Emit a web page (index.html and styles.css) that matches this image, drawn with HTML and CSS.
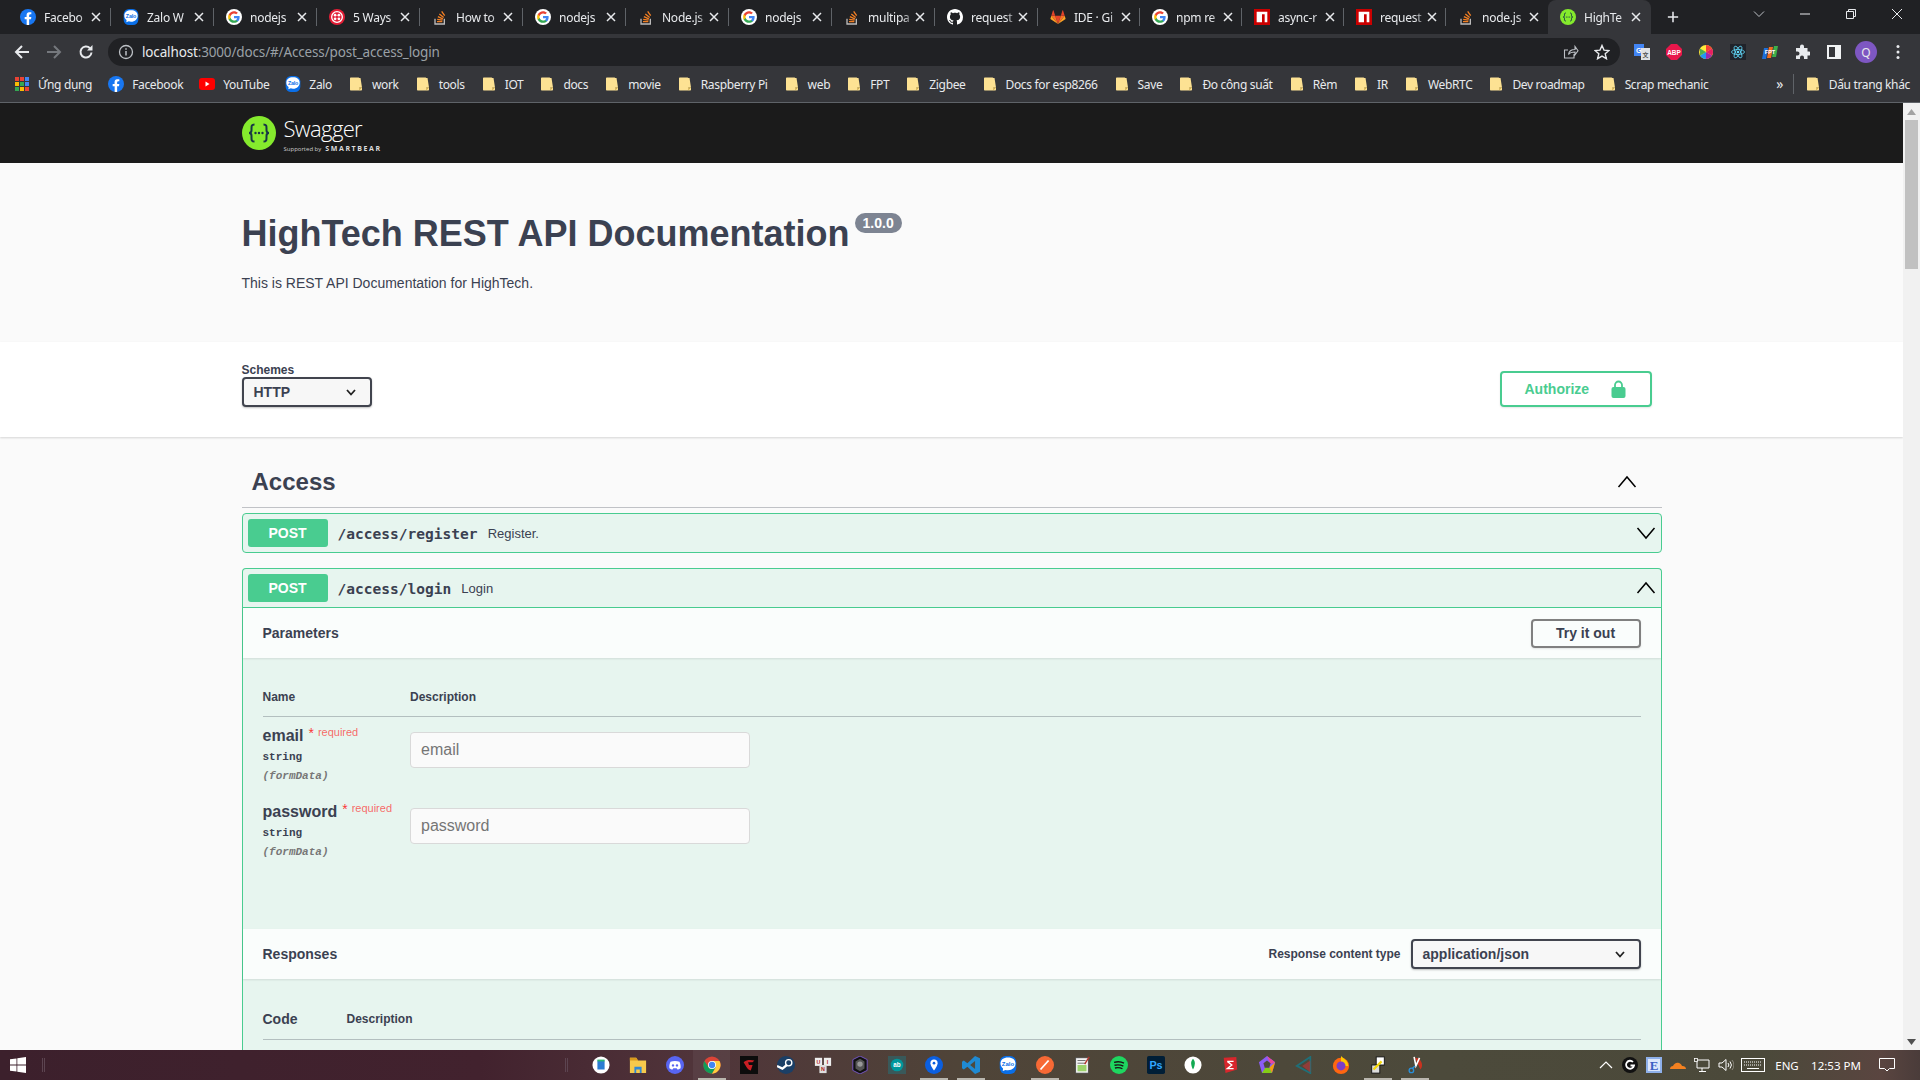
FILE: index.html
```html
<!DOCTYPE html>
<html lang="en">
<head>
<meta charset="utf-8">
<title>HighTech REST API Documentation</title>
<link rel="stylesheet" href="styles.css">
</head>
<body>
<svg class="defs" width="0" height="0" aria-hidden="true">
  <defs>
    <symbol id="i-g" viewBox="0 0 24 24">
      <circle cx="12" cy="12" r="12" fill="#fff"/>
      <g transform="translate(2.4 2.4) scale(.8)">
      <path fill="#4285F4" d="M22.56 12.25c0-.78-.07-1.53-.2-2.25H12v4.26h5.92c-.26 1.37-1.04 2.53-2.21 3.31v2.77h3.57c2.08-1.92 3.28-4.74 3.28-8.09z"/>
      <path fill="#34A853" d="M12 23c2.97 0 5.46-.98 7.28-2.66l-3.57-2.77c-.98.66-2.23 1.06-3.71 1.06-2.86 0-5.29-1.93-6.16-4.53H2.18v2.84C3.99 20.53 7.7 23 12 23z"/>
      <path fill="#FBBC05" d="M5.84 14.09c-.22-.66-.35-1.36-.35-2.09s.13-1.43.35-2.09V7.07H2.18C1.43 8.55 1 10.22 1 12s.43 3.45 1.18 4.93l3.66-2.84z"/>
      <path fill="#EA4335" d="M12 5.38c1.62 0 3.06.56 4.21 1.64l3.15-3.15C17.45 2.09 14.97 1 12 1 7.7 1 3.99 3.47 2.18 7.07l3.66 2.84c.87-2.6 3.3-4.53 6.16-4.53z"/>
      </g>
    </symbol>
    <symbol id="i-fb" viewBox="0 0 24 24">
      <circle cx="12" cy="12" r="12" fill="#1877f2"/>
      <path fill="#fff" d="M16.5 15.5l.5-3.5h-3.3V9.8c0-1 .5-1.9 2-1.9H17V5c-2-.4-5.8-.6-6.8 2.3-.4 1.2-.3 3.3-.3 4.7H7v3.5h3V24h3.7v-8.5z"/>
    </symbol>
    <symbol id="i-zalo" viewBox="0 0 24 24">
      <rect x="1" width="22" height="24" rx="8" fill="#0a6fe8"/>
      <path fill="#fff" d="M2 10C2 5 6 2 12 2s10 3 10 8-4 9-10 9c-1.200 0-2.300-.2-3.300-.5L5 20l.4-3.500C3.500 15 2 13 2 10z"/>
      <text x="12" y="13" class="svg-zalo">Zalo</text>
    </symbol>
    <symbol id="i-twilio" viewBox="0 0 24 24">
      <circle cx="12" cy="12" r="12" fill="#e31e36"/>
      <circle cx="12" cy="12" r="8" fill="none" stroke="#fff" stroke-width="2"/>
      <circle cx="9.200" cy="9.200" r="2" fill="#fff"/><circle cx="14.800" cy="9.200" r="2" fill="#fff"/>
      <circle cx="9.200" cy="14.800" r="2" fill="#fff"/><circle cx="14.800" cy="14.800" r="2" fill="#fff"/>
    </symbol>
    <symbol id="i-so" viewBox="0 0 24 24">
      <path d="M4.500 14.500V22.500H18.500V14.500" fill="none" stroke="#bcbbbb" stroke-width="2"/>
      <path d="M7.500 19h8M7.800 15.500l8 1.300M8.800 11.500l7.500 3.300M11 7.500l6.500 5.200M14.500 3.500l4.500 6.500" fill="none" stroke="#f48024" stroke-width="2"/>
    </symbol>
    <symbol id="i-gh" viewBox="0 0 16 16">
      <path fill="#fff" d="M8 0C3.580 0 0 3.580 0 8c0 3.540 2.290 6.530 5.470 7.590.4.070.55-.17.55-.38 0-.19-.01-.82-.01-1.490-2.010.37-2.530-.49-2.690-.94-.09-.23-.48-.94-.82-1.130-.28-.15-.68-.52-.01-.53.63-.01 1.080.58 1.230.82.72 1.210 1.870.87 2.330.66.07-.52.28-.87.51-1.070-1.780-.2-3.640-.89-3.640-3.950 0-.87.31-1.590.82-2.150-.08-.2-.36-1.020.08-2.120 0 0 .67-.21 2.200.82.64-.18 1.320-.27 2-.27s1.360.09 2 .27c1.530-1.040 2.200-.82 2.200-.82.44 1.100.16 1.920.08 2.120.51.56.82 1.270.82 2.150 0 3.070-1.870 3.750-3.650 3.950.29.25.54.73.54 1.480 0 1.070-.01 1.930-.01 2.200 0 .21.15.46.55.38A8.010 8.010 0 0016 8c0-4.420-3.580-8-8-8z"/>
    </symbol>
    <symbol id="i-gl" viewBox="0 0 24 24">
      <path fill="#e24329" d="M12 22.500L16.200 10H7.800z"/>
      <path fill="#fc6d26" d="M12 22.500L7.800 10H2z"/>
      <path fill="#fca326" d="M2 10L.7 14.300c-.1.4 0 .8.4 1L12 22.500z"/>
      <path fill="#e24329" d="M2 10h5.800L5.300 2.300c-.1-.4-.7-.4-.9 0z"/>
      <path fill="#fc6d26" d="M12 22.500L16.200 10H22z"/>
      <path fill="#fca326" d="M22 10l1.300 4.300c.1.4 0 .8-.4 1L12 22.500z"/>
      <path fill="#e24329" d="M22 10h-5.800l2.500-7.700c.1-.4.7-.4.9 0z"/>
    </symbol>
    <symbol id="i-npm" viewBox="0 0 24 24">
      <rect width="24" height="24" fill="#cb0000"/>
      <path fill="#fff" d="M4 4h16v16h-4V8h-4v12H4z"/>
    </symbol>
    <symbol id="i-sw" viewBox="0 0 34 34">
      <circle cx="17" cy="17" r="17" fill="#85ea2d"/>
      <path d="M12.500 8.500c-3 0-3 1.500-3 4v1.800c0 1.700-1 2.700-2.500 2.700 1.500 0 2.500 1 2.500 2.700v1.800c0 2.500 0 4 3 4M21.500 8.500c3 0 3 1.500 3 4v1.800c0 1.700 1 2.700 2.500 2.700-1.500 0-2.500 1-2.500 2.700v1.800c0 2.500 0 4-3 4" fill="none" stroke="#173646" stroke-width="2"/>
      <circle cx="13.500" cy="17" r="1.200" fill="#173646"/><circle cx="17" cy="17" r="1.200" fill="#173646"/><circle cx="20.500" cy="17" r="1.200" fill="#173646"/>
    </symbol>
    <symbol id="i-folder" viewBox="0 0 16 16">
      <path fill="#fde293" d="M2 2.500C2 1.900 2.400 1.500 3 1.500h7.500c.5 0 .8.300.8.800V11.500H14v2c0 .6-.4 1-1 1H3c-.6 0-1-.4-1-1z"/>
      <path fill="#fde293" d="M10 2h2.500l1.500 9.500h-4z"/>
      <path fill="#c9a94f" d="M11.300 11.500H14L11.300 14.500z"/>
    </symbol>
    <symbol id="i-chrome" viewBox="0 0 24 24">
      <circle cx="12" cy="12" r="11.500" fill="#db4437"/>
      <path fill="#0f9d58" d="M1.800 6.500A11.500 11.500 0 0 0 12 23.500l5-8.500H7.500z"/>
      <path fill="#ffcd40" d="M12 23.500A11.500 11.500 0 0 0 22 6.500h-10l5 8.500z"/>
      <circle cx="12" cy="12" r="5.300" fill="#fff"/><circle cx="12" cy="12" r="4.200" fill="#4285f4"/>
    </symbol>
    <symbol id="i-chev" viewBox="0 0 20 20">
      <polyline points="1.500,5 10,15 18.500,5" fill="none" stroke="#000" stroke-width="1.500"/>
    </symbol>
    <symbol id="i-chevup" viewBox="0 0 20 20">
      <polyline points="1.500,15 10,5 18.500,15" fill="none" stroke="#000" stroke-width="1.500"/>
    </symbol>
    <symbol id="i-sel" viewBox="0 0 10 10">
      <polyline points="1,3 5,7.500 9,3" fill="none" stroke="#222" stroke-width="1.800"/>
    </symbol>
    <symbol id="i-x" viewBox="0 0 10 10">
      <path d="M1 1l8 8M9 1l-8 8" stroke="#e8eaed" stroke-width="1.500" fill="none"/>
    </symbol>
  </defs>
</svg>

<div class="app">
  <header class="tabstrip">
    <div class="tab"><svg class="fav"><use href="#i-fb"/></svg><span class="tab-title">Facebo</span><svg class="tab-x"><use href="#i-x"/></svg></div>
    <div class="tab"><svg class="fav"><use href="#i-zalo"/></svg><span class="tab-title">Zalo W</span><svg class="tab-x"><use href="#i-x"/></svg></div>
    <div class="tab"><svg class="fav"><use href="#i-g"/></svg><span class="tab-title">nodejs</span><svg class="tab-x"><use href="#i-x"/></svg></div>
    <div class="tab"><svg class="fav"><use href="#i-twilio"/></svg><span class="tab-title">5 Ways</span><svg class="tab-x"><use href="#i-x"/></svg></div>
    <div class="tab"><svg class="fav"><use href="#i-so"/></svg><span class="tab-title">How to</span><svg class="tab-x"><use href="#i-x"/></svg></div>
    <div class="tab"><svg class="fav"><use href="#i-g"/></svg><span class="tab-title">nodejs</span><svg class="tab-x"><use href="#i-x"/></svg></div>
    <div class="tab"><svg class="fav"><use href="#i-so"/></svg><span class="tab-title">Node.js</span><svg class="tab-x"><use href="#i-x"/></svg></div>
    <div class="tab"><svg class="fav"><use href="#i-g"/></svg><span class="tab-title">nodejs</span><svg class="tab-x"><use href="#i-x"/></svg></div>
    <div class="tab"><svg class="fav"><use href="#i-so"/></svg><span class="tab-title">multipa</span><svg class="tab-x"><use href="#i-x"/></svg></div>
    <div class="tab"><svg class="fav"><use href="#i-gh"/></svg><span class="tab-title">request</span><svg class="tab-x"><use href="#i-x"/></svg></div>
    <div class="tab tab-narrow"><svg class="fav"><use href="#i-gl"/></svg><span class="tab-title">IDE · Gi</span><svg class="tab-x"><use href="#i-x"/></svg></div>
    <div class="tab tab-narrow"><svg class="fav"><use href="#i-g"/></svg><span class="tab-title">npm re</span><svg class="tab-x"><use href="#i-x"/></svg></div>
    <div class="tab tab-narrow"><svg class="fav"><use href="#i-npm"/></svg><span class="tab-title">async-r</span><svg class="tab-x"><use href="#i-x"/></svg></div>
    <div class="tab tab-narrow"><svg class="fav"><use href="#i-npm"/></svg><span class="tab-title">request</span><svg class="tab-x"><use href="#i-x"/></svg></div>
    <div class="tab tab-narrow tab-before-active"><svg class="fav"><use href="#i-so"/></svg><span class="tab-title">node.js</span><svg class="tab-x"><use href="#i-x"/></svg></div>
    <div class="tab tab-active"><svg class="fav"><use href="#i-sw"/></svg><span class="tab-title">HighTe</span><svg class="tab-x"><use href="#i-x"/></svg></div>
    <div class="newtab"><svg class="win-ico" viewBox="0 0 14 14"><path d="M7 1v12M1 7h12" stroke="#e8eaed" stroke-width="1.800" fill="none"/></svg></div>
    <div class="win-controls">
      <div class="win-btn"><svg class="win-ico" viewBox="0 0 12 12"><polyline points="1,3.500 6,8.500 11,3.500" fill="none" stroke="#bdc1c6" stroke-width="1"/></svg></div>
      <div class="win-btn"><svg class="win-ico" viewBox="0 0 12 12"><path d="M1 6h10" stroke="#e8eaed" stroke-width="1"/></svg></div>
      <div class="win-btn"><svg class="win-ico" viewBox="0 0 12 12"><path d="M1.500 3.500h7v7h-7zM3.500 3.500v-2h7v7h-2" fill="none" stroke="#e8eaed" stroke-width="1"/></svg></div>
      <div class="win-btn"><svg class="win-ico" viewBox="0 0 12 12"><path d="M1 1l10 10M11 1L1 11" stroke="#e8eaed" stroke-width="1"/></svg></div>
    </div>
  </header>

  <div class="toolbar">
    <div class="tool-btn"><svg class="tool-ico" viewBox="0 0 16 16"><path d="M15 8H2M8 2L2 8l6 6" fill="none" stroke="#e8eaed" stroke-width="2"/></svg></div>
    <div class="tool-btn"><svg class="tool-ico" viewBox="0 0 16 16"><path d="M1 8h13M8 2l6 6-6 6" fill="none" stroke="#75787d" stroke-width="2"/></svg></div>
    <div class="tool-btn"><svg class="tool-ico" viewBox="0 0 16 16"><path d="M13.500 8.500A5.500 5.500 0 1 1 12 4.200" fill="none" stroke="#e8eaed" stroke-width="2"/><path d="M14.500 1v5.500H9z" fill="#e8eaed"/></svg></div>
    <div class="address">
      <svg class="tool-ico" viewBox="0 0 16 16"><circle cx="8" cy="8" r="6.500" fill="none" stroke="#bdc1c6" stroke-width="1.300"/><path d="M8 7v4.500M8 4.200v1.500" stroke="#bdc1c6" stroke-width="1.500"/></svg>
      <span class="url"><span class="url-host">localhost</span>:3000/docs/#/Access/post_access_login</span>
      <span class="addr-end">
        <svg class="tool-ico" viewBox="0 0 16 16"><path d="M11 10v4H1.500V6H5M5.500 10.500c.5-3.500 3-5 6.500-5V2.500l3 4.300-3 4V8c-2.500 0-5 .5-6.500 2.500z" fill="none" stroke="#bdc1c6" stroke-width="1.100"/></svg>
        <svg class="tool-ico" viewBox="0 0 16 16"><path d="M8 1.500l2 4.600 5 .4-3.800 3.300 1.200 4.900L8 12.100l-4.400 2.600 1.200-4.900L1 6.500l5-.4z" fill="none" stroke="#e8eaed" stroke-width="1.400"/></svg>
      </span>
    </div>
    <div class="ext-row">
      <div class="tool-btn"><svg class="ext-ico" viewBox="0 0 16 16"><rect x="0" y="0" width="10" height="12" fill="#4285f4"/><rect x="7" y="4" width="9" height="12" fill="#dfe1e5"/><text x="4.800" y="8.500" class="svg-ext">G</text><text x="11.500" y="13" class="svg-ext svg-ext-dark">文</text></svg></div>
      <div class="tool-btn"><svg class="ext-ico" viewBox="0 0 16 16"><path d="M5 0h6l5 5v6l-5 5H5l-5-5V5z" fill="#e8174b"/><text x="8" y="10.500" class="svg-abp">ABP</text></svg></div>
      <div class="tool-btn"><svg class="ext-ico" viewBox="0 0 16 16"><circle cx="8" cy="8" r="7" fill="#ffeb3b"/><path d="M8 8V1a7 7 0 0 1 6 3.500z" fill="#f44336"/><path d="M8 8l6-3.500A7 7 0 0 1 14 11.500z" fill="#e91e63"/><path d="M8 8l6 3.500A7 7 0 0 1 8 15z" fill="#9c27b0"/><path d="M8 8v7a7 7 0 0 1-6-3.500z" fill="#2196f3"/><path d="M8 8l-6 3.500V4.500z" fill="#4caf50"/></svg></div>
      <div class="tool-btn"><svg class="ext-ico" viewBox="0 0 16 16"><rect width="16" height="16" fill="#20232a"/><g fill="none" stroke="#61dafb" stroke-width=".8"><ellipse cx="8" cy="8" rx="6.500" ry="2.500"/><ellipse cx="8" cy="8" rx="6.500" ry="2.500" transform="rotate(60 8 8)"/><ellipse cx="8" cy="8" rx="6.500" ry="2.500" transform="rotate(120 8 8)"/></g><circle cx="8" cy="8" r="1.300" fill="#61dafb"/></svg></div>
      <div class="tool-btn"><svg class="ext-ico" viewBox="0 0 16 16"><path d="M2 4h4L4 15H0z" fill="#1e6fd9"/><path d="M7 3h4L9 14H5z" fill="#f26f21"/><path d="M12 2h4l-2 11h-4z" fill="#3cb04a"/><text x="8" y="10" class="svg-fpt">FPT</text></svg></div>
      <div class="tool-btn"><svg class="ext-ico" viewBox="0 0 16 16"><path fill="#e8eaed" d="M6 2.500a2 2 0 0 1 4 0V4h3.500v3.500H15a2 2 0 0 1 0 4h-1.500V15H10v-1.500a2 2 0 0 0-4 0V15H2v-3.500h1.500a2 2 0 0 0 0-4H2V4h4z"/></svg></div>
      <div class="tool-btn"><svg class="ext-ico" viewBox="0 0 16 16"><path fill-rule="evenodd" d="M1 1h14v14H1zM3 3v10h6V3z" fill="#f1f3f4"/></svg></div>
      <div class="tool-btn"><span class="avatar">Q</span></div>
      <div class="tool-btn"><svg class="ext-ico" viewBox="0 0 16 16"><circle cx="8" cy="2.500" r="1.500" fill="#e8eaed"/><circle cx="8" cy="8" r="1.500" fill="#e8eaed"/><circle cx="8" cy="13.500" r="1.500" fill="#e8eaed"/></svg></div>
    </div>
  </div>

  <nav class="bookmarks">
    <div class="bm"><svg class="fav" viewBox="0 0 16 16"><g><rect x="1" y="1" width="4" height="4" fill="#ea4335"/><rect x="6" y="1" width="4" height="4" fill="#ea4335"/><rect x="11" y="1" width="4" height="4" fill="#4285f4"/><rect x="1" y="6" width="4" height="4" fill="#fbbc05"/><rect x="6" y="6" width="4" height="4" fill="#34a853"/><rect x="11" y="6" width="4" height="4" fill="#4285f4"/><rect x="1" y="11" width="4" height="4" fill="#34a853"/><rect x="6" y="11" width="4" height="4" fill="#fbbc05"/><rect x="11" y="11" width="4" height="4" fill="#ea4335"/></g></svg><span>Ứng dụng</span></div>
    <div class="bm"><svg class="fav"><use href="#i-fb"/></svg><span>Facebook</span></div>
    <div class="bm"><svg class="fav" viewBox="0 0 16 16"><rect y="2" width="16" height="12" rx="3" fill="#f00"/><path d="M6.500 5.500v5l4-2.500z" fill="#fff"/></svg><span>YouTube</span></div>
    <div class="bm"><svg class="fav"><use href="#i-zalo"/></svg><span>Zalo</span></div>
    <div class="bm"><svg class="fav"><use href="#i-folder"/></svg><span>work</span></div>
    <div class="bm"><svg class="fav"><use href="#i-folder"/></svg><span>tools</span></div>
    <div class="bm"><svg class="fav"><use href="#i-folder"/></svg><span>IOT</span></div>
    <div class="bm"><svg class="fav"><use href="#i-folder"/></svg><span>docs</span></div>
    <div class="bm"><svg class="fav"><use href="#i-folder"/></svg><span>movie</span></div>
    <div class="bm"><svg class="fav"><use href="#i-folder"/></svg><span>Raspberry Pi</span></div>
    <div class="bm"><svg class="fav"><use href="#i-folder"/></svg><span>web</span></div>
    <div class="bm"><svg class="fav"><use href="#i-folder"/></svg><span>FPT</span></div>
    <div class="bm"><svg class="fav"><use href="#i-folder"/></svg><span>Zigbee</span></div>
    <div class="bm"><svg class="fav"><use href="#i-folder"/></svg><span>Docs for esp8266</span></div>
    <div class="bm"><svg class="fav"><use href="#i-folder"/></svg><span>Save</span></div>
    <div class="bm"><svg class="fav"><use href="#i-folder"/></svg><span>Đo công suất</span></div>
    <div class="bm"><svg class="fav"><use href="#i-folder"/></svg><span>Rèm</span></div>
    <div class="bm"><svg class="fav"><use href="#i-folder"/></svg><span>IR</span></div>
    <div class="bm"><svg class="fav"><use href="#i-folder"/></svg><span>WebRTC</span></div>
    <div class="bm"><svg class="fav"><use href="#i-folder"/></svg><span>Dev roadmap</span></div>
    <div class="bm"><svg class="fav"><use href="#i-folder"/></svg><span>Scrap mechanic</span></div>
    <div class="bm-end">
      <span class="bm-more">»</span>
      <div class="bm bm-other"><svg class="fav"><use href="#i-folder"/></svg><span>Dấu trang khác</span></div>
    </div>
  </nav>

  <div class="viewport">
    <main class="page">
      <div class="topbar">
        <div class="wrap logo">
          <svg class="logo-mark"><use href="#i-sw"/></svg>
          <div class="logo-text">
            <span class="logo-name">Swagger</span>
            <span class="logo-sub"><span class="logo-by">Supported by</span><span class="logo-sb">SMARTBEAR</span></span>
          </div>
        </div>
      </div>

      <section class="info">
        <div class="wrap">
          <div class="title-row">
            <h2 class="title">HighTech REST API Documentation</h2>
            <span class="version">1.0.0</span>
          </div>
          <p class="desc">This is REST API Documentation for HighTech.</p>
        </div>
      </section>

      <section class="schemes">
        <div class="wrap schemes-row">
          <div>
            <div class="schemes-label">Schemes</div>
            <div class="select select-http"><span>HTTP</span><svg class="sel-ico"><use href="#i-sel"/></svg></div>
          </div>
          <button class="authorize"><span>Authorize</span>
            <svg class="lock" viewBox="0 0 15 18"><path d="M4 8V5a3.500 3.500 0 0 1 7 0v3" fill="none" stroke="#49cc90" stroke-width="1.800"/><rect x="0.500" y="7" width="14" height="11" rx="2" fill="#49cc90"/></svg>
          </button>
        </div>
      </section>

      <div class="wrap">
        <div class="tag">
          <h3 class="tag-name">Access</h3>
          <svg class="chev"><use href="#i-chevup"/></svg>
        </div>

        <div class="opblock opblock-first">
          <div class="summary">
            <span class="method">POST</span>
            <span class="path">/access/register</span>
            <span class="sum-text">Register.</span>
            <svg class="chev"><use href="#i-chev"/></svg>
          </div>
        </div>

        <div class="opblock opblock-open">
          <div class="summary summary-open">
            <span class="method">POST</span>
            <span class="path">/access/login</span>
            <span class="sum-text">Login</span>
            <svg class="chev"><use href="#i-chevup"/></svg>
          </div>

          <div class="sec-head">
            <h4 class="sec-title">Parameters</h4>
            <button class="try">Try it out</button>
          </div>

          <div class="params">
            <div class="param-head">
              <span>Name</span>
              <span>Description</span>
            </div>
            <div class="param-row">
              <div class="param-name">
                <div class="pname-line"><span class="pname">email</span><span class="star">*</span><span class="req">required</span></div>
                <div class="ptype">string</div>
                <div class="pin">(formData)</div>
              </div>
              <div class="param-val"><input class="input" type="text" placeholder="email"></div>
            </div>
            <div class="param-row">
              <div class="param-name">
                <div class="pname-line"><span class="pname">password</span><span class="star">*</span><span class="req">required</span></div>
                <div class="ptype">string</div>
                <div class="pin">(formData)</div>
              </div>
              <div class="param-val"><input class="input" type="text" placeholder="password"></div>
            </div>
          </div>

          <div class="sec-head">
            <h4 class="sec-title">Responses</h4>
            <div class="rct">
              <span class="rct-label">Response content type</span>
              <div class="select select-json"><span>application/json</span><svg class="sel-ico"><use href="#i-sel"/></svg></div>
            </div>
          </div>

          <div class="resp">
            <div class="resp-head"><span class="resp-code">Code</span><span class="resp-desc">Description</span></div>
          </div>
        </div>
      </div>
    </main>

    <aside class="scrollbar">
      <div class="sb-btn"><svg class="sb-arrow" viewBox="0 0 9 6"><path d="M4.500 0L9 6H0z" fill="#a3a3a3"/></svg></div>
      <div class="sb-thumb"></div>
      <div class="sb-track"></div>
      <div class="sb-btn"><svg class="sb-arrow" viewBox="0 0 9 6"><path d="M0 0h9L4.500 6z" fill="#505050"/></svg></div>
    </aside>
  </div>

  <footer class="taskbar">
    <svg class="win-logo" viewBox="0 0 16 16"><path fill="#fff" d="M0 2.300l6.500-.9v6.200H0zM7.300 1.300L16 0v7.600H7.300zM0 8.400h6.500v6.200L0 13.700zM7.300 8.400H16V16l-8.700-1.200z"/></svg>
    <span class="task-div"></span>
    <span class="task-div task-div-2"></span>

    <div class="ticon"><svg class="tsvg" viewBox="0 0 20 20"><circle cx="10" cy="10" r="9.500" fill="#fff"/><rect x="6" y="5" width="8" height="10" fill="#2b7cd3"/><rect x="6" y="4" width="8" height="2" fill="#2bb673"/></svg></div>
    <div class="ticon"><svg class="tsvg" viewBox="0 0 20 20"><path d="M1 2h7l2 3h9v14H1z" fill="#f6c94c"/><path d="M1 2h7l2 3H1z" fill="#d99a1c"/><path d="M6 12h8v7h-2v-4H8v4H6z" fill="#2f88d6"/></svg></div>
    <div class="ticon"><svg class="tsvg" viewBox="0 0 20 20"><circle cx="10" cy="10" r="10" fill="#5865f2"/><path d="M5 6.500c3-1.300 7-1.300 10 0 1 2 1.500 4.500 1.200 7-1.300 1-2.500 1.300-3.500 1.500l-.8-1.300H8.100l-.8 1.300c-1-.2-2.200-.5-3.500-1.500-.3-2.500.2-5 1.200-7z" fill="#fff"/><circle cx="7.800" cy="10.500" r="1.300" fill="#5865f2"/><circle cx="12.200" cy="10.500" r="1.300" fill="#5865f2"/></svg></div>
    <div class="ticon ticon-run ticon-active"><svg class="tsvg"><use href="#i-chrome"/></svg></div>
    <div class="ticon"><svg class="tsvg" viewBox="0 0 20 20"><rect width="20" height="20" fill="#0c0c0c"/><path d="M4 7c3-3 8-3 12-2l-2 2H9l1 3h4l-2 6c-2 0-4-2-5-4z" fill="#c81e24"/></svg></div>
    <div class="ticon"><svg class="tsvg" viewBox="0 0 20 20"><circle cx="10" cy="10" r="10" fill="#1b3f66"/><circle cx="13" cy="7.500" r="3.500" fill="none" stroke="#fff" stroke-width="1.500"/><path d="M0 11l6 3 5-4" stroke="#fff" stroke-width="2.500" fill="none"/></svg></div>
    <div class="ticon"><svg class="tsvg" viewBox="0 0 20 20"><rect x="1" y="2" width="8" height="9" fill="#eee"/><rect x="11" y="2" width="8" height="9" fill="#eee"/><rect x="6" y="10" width="8" height="9" fill="#ddd"/><text x="5" y="9" class="svg-uni">U</text><text x="15" y="9" class="svg-uni">I</text><text x="10" y="17" class="svg-uni">N</text></svg></div>
    <div class="ticon"><svg class="tsvg" viewBox="0 0 20 20"><path d="M10 0l8 4v12l-8 4-8-4V4z" fill="#111" stroke="#7d5bd0" stroke-width="1"/><path d="M5 6l5-3 5 3v8l-5 3-5-3z" fill="#555"/><circle cx="10" cy="9" r="3" fill="#999"/></svg></div>
    <div class="ticon"><svg class="tsvg" viewBox="0 0 20 20"><rect width="20" height="20" fill="#39595a"/><circle cx="10" cy="10" r="7" fill="#00979c"/><text x="10" y="12.500" class="svg-ard">ab</text></svg></div>
    <div class="ticon ticon-run"><svg class="tsvg" viewBox="0 0 20 20"><circle cx="10" cy="10" r="10" fill="#0b5fe0"/><path d="M10 4a4 4 0 0 1 4 4c0 3-4 8-4 8s-4-5-4-8a4 4 0 0 1 4-4z" fill="#fff"/><circle cx="10" cy="8" r="1.500" fill="#0b5fe0"/></svg></div>
    <div class="ticon ticon-run"><svg class="tsvg" viewBox="0 0 20 20"><path d="M14.500 0L20 2.500v15L14.500 20 6 12l-4 3-2-1.500v-7L2 5l4 3z" fill="#1f8ad2"/><path d="M14.500 5.500L9 10l5.500 4.500z" fill="#4d4a3c"/></svg></div>
    <div class="ticon"><svg class="tsvg"><use href="#i-zalo"/></svg></div>
    <div class="ticon ticon-run"><svg class="tsvg" viewBox="0 0 20 20"><circle cx="10" cy="10" r="10" fill="#f76935"/><path d="M5 15L14 5" stroke="#fff" stroke-width="2"/></svg></div>
    <div class="ticon"><svg class="tsvg" viewBox="0 0 20 20"><rect x="3" y="2" width="14" height="17" fill="#f4f4f4" stroke="#444" stroke-width=".8"/><rect x="5" y="10" width="10" height="7" fill="#9dd36b"/><path d="M5 5h9M5 8h9" stroke="#666" stroke-width="1"/><path d="M13 9l5-8" stroke="#b5332b" stroke-width="1.500"/></svg></div>
    <div class="ticon"><svg class="tsvg" viewBox="0 0 20 20"><circle cx="10" cy="10" r="10" fill="#1ed760"/><path d="M4.500 7c4-1 8-.7 11 1M5 10.300c3.500-.8 7-.5 9.800 1M5.500 13.300c3-.6 6-.4 8.300.9" fill="none" stroke="#191414" stroke-width="1.500"/></svg></div>
    <div class="ticon"><svg class="tsvg" viewBox="0 0 20 20"><rect width="20" height="20" rx="2" fill="#001e36"/><text x="10" y="14.500" class="svg-ps">Ps</text></svg></div>
    <div class="ticon"><svg class="tsvg" viewBox="0 0 20 20"><circle cx="10" cy="10" r="9.500" fill="#fff"/><path d="M10 3c2.500 2.500 3 6 0 12-3-6-2.500-9.500 0-12z" fill="#13aa52"/></svg></div>
    <div class="ticon"><svg class="tsvg" viewBox="0 0 20 20"><path d="M3 2l14-1 1 14-13 4z" fill="#d8262c"/><path d="M7 6h7M7 6l5 4-5 4h7" stroke="#fff" stroke-width="1.500" fill="none"/></svg></div>
    <div class="ticon"><svg class="tsvg" viewBox="0 0 20 20"><path d="M10 0l9 7-3.500 12h-11L1 7z" fill="#8b5cf6"/><path d="M10 0l9 7-5 2z" fill="#ec4899"/><path d="M19 7l-3.500 12-3-6z" fill="#f59e0b"/><path d="M4.500 19h11l-3-6H8z" fill="#84cc16"/><path d="M10 5l4 3-1.500 5h-5L6 8z" fill="#4d4a3c"/></svg></div>
    <div class="ticon"><svg class="tsvg" viewBox="0 0 20 20"><path d="M17 1v18L2 11z" fill="none" stroke="#1f6f78" stroke-width="2"/><path d="M17 5L8 11l9 7z" fill="#a33a3a" opacity=".8"/></svg></div>
    <div class="ticon"><svg class="tsvg" viewBox="0 0 20 20"><circle cx="10" cy="11" r="9" fill="#ff6611"/><path d="M10 0c3 3 8 5 8 11H10z" fill="#ffc800"/><circle cx="10" cy="11" r="5" fill="#7b3ec9"/></svg></div>
    <div class="ticon ticon-run"><svg class="tsvg" viewBox="0 0 20 20"><rect x="8" y="1" width="9" height="9" fill="#fff" stroke="#111"/><rect x="3" y="10" width="9" height="9" fill="#ddd" stroke="#111"/><path d="M5 15l9-9" stroke="#f5d90a" stroke-width="2.500"/></svg></div>
    <div class="ticon ticon-run"><svg class="tsvg" viewBox="0 0 20 20"><path d="M10 2a8 8 0 0 1 6 13L10 2z" fill="#c9321f"/><path d="M9 1l2 10 4-9" stroke="#fff" stroke-width="1.800" fill="none"/><circle cx="6" cy="16" r="2.500" fill="none" stroke="#2a8fd8" stroke-width="1.500"/><path d="M7 14l3-3" stroke="#2a8fd8" stroke-width="1.500"/></svg></div>

    <div class="tray">
      <div class="tray-i"><svg class="tray-ico" viewBox="0 0 16 16"><polyline points="2,11 8,5 14,11" fill="none" stroke="#fff" stroke-width="1.200"/></svg></div>
      <div class="tray-i"><svg class="tray-ico" viewBox="0 0 16 16"><circle cx="8" cy="8" r="8" fill="#111"/><path d="M11 5a4 4 0 1 0 1 3.500H8.500" fill="none" stroke="#fff" stroke-width="1.800"/></svg></div>
      <div class="tray-i"><svg class="tray-ico" viewBox="0 0 16 16"><rect width="16" height="16" fill="#8eb0ea"/><rect x="2" y="2" width="12" height="12" fill="#dbe6fb"/><text x="8" y="13" class="svg-e">E</text></svg></div>
      <div class="tray-i"><svg class="tray-ico" viewBox="0 0 16 16"><path d="M0 12c0-2 1.500-3 3-3 1-2.500 3.500-4 6-3 1.500.5 2.500 1.700 3 3 2-.3 4 1 4 3z" fill="#f48120"/></svg></div>
      <div class="tray-i"><svg class="tray-ico" viewBox="0 0 16 16"><path d="M3 3h12v8H3zM8 11v3M5 14.500h7" fill="none" stroke="#fff" stroke-width="1"/><rect x="0.500" y="1.500" width="3" height="3" fill="#4d4a3c" stroke="#fff" stroke-width=".8"/></svg></div>
      <div class="tray-i"><svg class="tray-ico" viewBox="0 0 16 16"><path d="M1 6h3l4-3.500v11L4 10H1z" fill="none" stroke="#fff" stroke-width="1"/><path d="M10 6a3 3 0 0 1 0 4M12 4.500a5.500 5.500 0 0 1 0 7" fill="none" stroke="#fff" stroke-width="1"/><path d="M14 3a8 8 0 0 1 0 10" fill="none" stroke="#8c8a80" stroke-width="1"/></svg></div>
      <div class="tray-i tray-kb"><svg class="kb-ico" viewBox="0 0 24 14"><rect x=".5" y=".5" width="23" height="13" fill="none" stroke="#fff"/><path d="M3 4h18M3 7h18" stroke="#fff" stroke-dasharray="1 1"/><path d="M6 10.500h12" stroke="#fff"/></svg></div>
      <span class="tray-lang">ENG</span>
      <span class="tray-time">12:53 PM</span>
      <div class="tray-note"><svg class="note-ico" viewBox="0 0 16 14"><path d="M.5.500h15v10h-5l-2.500 2.500-2.500-2.500h-5z" fill="none" stroke="#fff" stroke-width="1"/></svg></div>
      <div class="show-desk"></div>
    </div>
  </footer>
</div>
</body>
</html>
```

FILE: styles.css
```css
* { box-sizing: border-box; }
html, body { margin: 0; padding: 0; height: 100%; overflow: hidden; }
body { font-family: "Liberation Sans", Arial, sans-serif; color: #3b4151; }
.defs { position: absolute; }
.app { display: flex; flex-direction: column; width: 1920px; height: 1080px; overflow: hidden; }

/* browser chrome */
.tabstrip { flex: 0 0 34px; background: #202124; display: flex; align-items: center; padding-left: 8px; font-family: "Noto Sans", sans-serif; font-size: 12px; letter-spacing: -.25px; color: #e8eaed; }
.tab { flex: 0 0 103px; height: 18px; display: flex; align-items: center; padding-left: 12px; border-right: 1px solid #5f6368; }
.tab-narrow { flex-basis: 102px; }
.tab-before-active { border-right-color: transparent; }
.tab-active { flex-basis: 103px; height: 34px; align-self: flex-end; background: #35363a; border-right: 0; border-radius: 8px 8px 0 0; }
.fav { width: 16px; height: 16px; flex: none; display: block; }
.tab-title { width: 44px; margin-left: 8px; white-space: nowrap; overflow: hidden; -webkit-mask-image: linear-gradient(90deg, #000 80%, rgba(0,0,0,.25)); mask-image: linear-gradient(90deg, #000 80%, rgba(0,0,0,.25)); }
.tab-x { width: 10px; height: 10px; margin-left: 3px; flex: none; }
.newtab { width: 28px; margin-left: 8px; display: flex; justify-content: center; }
.win-ico { width: 12px; height: 12px; display: block; }
.win-controls { margin-left: auto; display: flex; align-self: flex-start; height: 28px; }
.win-btn { width: 46px; display: flex; align-items: center; justify-content: center; }

.toolbar { flex: 0 0 32px; background: #35363a; display: flex; align-items: flex-start; padding: 4px 0 0 6px; }
.tool-btn { width: 32px; height: 28px; display: flex; align-items: center; justify-content: center; flex: none; }
.tool-ico { width: 16px; height: 16px; display: block; flex: none; }
.address { width: 1512px; height: 28px; margin-left: 6px; background: #202124; border-radius: 14px; display: flex; align-items: center; padding: 0 10px; gap: 8px; font-family: "Noto Sans", sans-serif; font-size: 13.500px; letter-spacing: -.15px; color: #9aa0a6; }
.url-host { color: #e8eaed; }
.addr-end { margin-left: auto; display: flex; gap: 15px; }
.ext-row { display: flex; margin-left: 6px; }
.ext-ico { width: 16px; height: 16px; display: block; }
.avatar { width: 22px; height: 22px; border-radius: 50%; background: #7e57c2; color: #e8eaed; font: 400 12px "Noto Sans", sans-serif; display: flex; align-items: center; justify-content: center; }
.svg-ext { font: 700 7px "Liberation Sans", sans-serif; fill: #fff; text-anchor: middle; }
.svg-ext-dark { fill: #555; font-family: "Noto Sans CJK SC", sans-serif; font-size: 6px; }
.svg-abp { font: 700 6.400px "Liberation Sans", sans-serif; fill: #fff; text-anchor: middle; }
.svg-fpt { font: 700 5.500px "Liberation Sans", sans-serif; fill: #fff; text-anchor: middle; }
.svg-zalo { font: 700 8px "Liberation Sans", sans-serif; fill: #0a6fe8; text-anchor: middle; }
.svg-uni { font: 700 6px "Liberation Sans", sans-serif; fill: #b3261e; text-anchor: middle; }
.svg-ard { font: 700 7px "Liberation Sans", sans-serif; fill: #fff; text-anchor: middle; }
.svg-ps { font: 700 12px "Liberation Sans", sans-serif; fill: #31a8ff; text-anchor: middle; }
.svg-e { font: 700 13px "Liberation Serif", serif; fill: #3b5fc4; text-anchor: middle; }

.bookmarks { flex: 0 0 37px; background: #35363a; border-bottom: 1px solid #5f6368; display: flex; align-items: center; font-family: "Noto Sans", sans-serif; font-size: 12px; letter-spacing: -.34px; color: #e8eaed; padding-left: 6px; }
.bm { display: flex; align-items: center; gap: 8px; padding: 0 8px; white-space: nowrap; flex: none; }
.bm-end { margin-left: auto; display: flex; align-items: center; }
.bm-more { width: 27px; font-size: 14px; text-align: center; border-right: 1px solid #5f6368; line-height: 20px; margin-right: 3px; padding: 0 4px; }
.bm-other { padding-right: 10px; }

/* page */
.viewport { flex: 1; display: flex; min-height: 0; }
.page { flex: 1; min-width: 0; background: #fafafa; overflow: hidden; }
.wrap { max-width: 1460px; margin: 0 auto; padding: 0 20px; }
.scrollbar { flex: 0 0 17px; background: #f1f1f1; display: flex; flex-direction: column; }
.sb-btn { flex: 0 0 17px; display: flex; align-items: center; justify-content: center; }
.sb-arrow { width: 9px; height: 6px; display: block; }
.sb-thumb { flex: 0 0 149px; margin: 0 2px; background: #c1c1c1; }
.sb-track { flex: 1; }

.topbar { height: 60px; background: #1b1b1b; }
.logo { display: flex; align-items: center; height: 60px; gap: 8px; }
.logo-mark { width: 34px; height: 34px; display: block; flex: none; }
.logo-text { display: flex; flex-direction: column; color: #fff; font-family: "Open Sans", sans-serif; padding-top: 3px; }
.logo-name { font-size: 22px; line-height: 26px; letter-spacing: -.65px; font-weight: 300; }
.logo-sub { display: flex; align-items: baseline; gap: 4px; height: 10px; line-height: 10px; margin-top: 3px; }
.logo-by { font-size: 6px; color: #ccc; }
.logo-sb { font-size: 7px; font-weight: 700; letter-spacing: 1.600px; color: #ddd; }

.info { background: #fafafa; padding: 50px 0 49px; }
.title-row { display: flex; align-items: flex-start; gap: 5px; }
.title { margin: 0; font-size: 36px; line-height: 41px; font-weight: 700; color: #3b4151; }
.version { height: 20px; padding: 0 8px; border-radius: 10px; background: #7d8492; color: #fff; font-size: 14px; font-weight: 700; line-height: 20px; }
.desc { margin: 19px 0 0; font-size: 14px; line-height: 20px; color: #3b4151; }

.schemes { background: #fff; box-shadow: 0 1px 2px rgba(0,0,0,.15); padding: 21px 0 30px; }
.schemes-row { display: flex; justify-content: space-between; align-items: flex-end; }
.schemes-label { font-size: 12px; font-weight: 700; line-height: 14px; }
.select { height: 30px; border: 2px solid #41444e; border-radius: 4px; background: #f7f7f7; box-shadow: 0 1px 2px rgba(0,0,0,.25); display: flex; align-items: center; justify-content: space-between; padding: 0 14px 0 10px; font-size: 14px; font-weight: 700; color: #3b4151; }
.select-http { width: 130px; }
.select-json { width: 230px; }
.sel-ico { width: 10px; height: 10px; display: block; }
.authorize { width: 152px; height: 36px; margin-right: 10px; border: 2px solid #49cc90; border-radius: 4px; background: transparent; box-shadow: 0 1px 2px rgba(0,0,0,.1); color: #49cc90; font: 700 14px "Liberation Sans", sans-serif; display: flex; align-items: center; padding: 0 0 0 23px; gap: 22px; }
.lock { width: 15px; height: 18px; display: block; }

.tag { margin-top: 20px; height: 51px; border-bottom: 1px solid rgba(59,65,81,.3); display: flex; align-items: center; justify-content: space-between; padding: 0 25px 1px 10px; }
.tag-name { margin: 0; font-size: 24px; font-weight: 700; color: #3b4151; }
.chev { width: 20px; height: 20px; display: block; flex: none; }

.opblock { border: 1px solid #49cc90; border-radius: 4px; background: rgba(73,204,144,.1); }
.opblock-first { margin-top: 5px; }
.opblock-open { margin-top: 15px; border-bottom: 0; border-radius: 4px 4px 0 0; }
.summary { display: flex; align-items: center; padding: 5px; }
.summary-open { border-bottom: 1px solid #49cc90; height: 39px; }
.method { width: 80px; height: 28px; border-radius: 3px; background: #49cc90; color: #fff; font-size: 14px; font-weight: 700; line-height: 28px; text-align: center; flex: none; }
.path { margin-left: 10px; font: 700 14.550px "DejaVu Sans Mono", monospace; color: #3b4151; white-space: nowrap; }
.sum-text { margin-left: 10px; font-size: 13px; color: #3b4151; }
.summary .chev { margin-left: auto; }

.sec-head { height: 50px; background: rgba(255,255,255,.8); box-shadow: 0 1px 2px rgba(0,0,0,.1); display: flex; align-items: center; justify-content: space-between; padding: 0 20px; }
.sec-title { margin: 0; font-size: 14px; font-weight: 700; color: #3b4151; }
.try { width: 110px; height: 29px; border: 2px solid #808080; border-radius: 4px; background: transparent; box-shadow: 0 1px 2px rgba(0,0,0,.1); color: #3b4151; font: 700 14px "Liberation Sans", sans-serif; }

.params { padding: 20px 20px 60px; }
.param-head { display: grid; grid-template-columns: 147.500px 1fr; padding: 12px 0; border-bottom: 1px solid rgba(59,65,81,.3); font-size: 12px; font-weight: 700; line-height: 14px; color: #3b4151; }
.param-row { display: grid; grid-template-columns: 147.500px 1fr; height: 76px; }
.param-name { padding-top: 9px; }
.pname-line { display: flex; align-items: flex-start; height: 20px; }
.pname { font-size: 16px; font-weight: 700; line-height: 20px; color: #3b4151; }
.star { margin-left: 5px; font-size: 14px; line-height: 14px; color: rgba(255,0,0,.8); }
.req { margin-left: 4px; font-size: 11px; line-height: 12px; color: rgba(255,0,0,.6); }
.ptype { margin-top: 4px; font: 700 11px/14px "Liberation Mono", monospace; color: #3b4151; }
.pin { margin-top: 5px; font: italic 700 11px/14px "Liberation Mono", monospace; color: #777; }
.param-val { padding-top: 15px; }
.input { display: block; width: 340px; height: 36px; border: 1px solid #d9d9d9; border-radius: 4px; background: #fafafa; padding: 0 10px; font: 400 16px "Liberation Sans", sans-serif; color: #3b4151; }
.input::placeholder { color: #757575; opacity: 1; }

.rct { display: flex; align-items: center; gap: 10px; }
.rct-label { font-size: 12px; font-weight: 700; color: #3b4151; }

.resp { padding: 20px 20px 0; height: 80px; }
.resp-head { display: flex; align-items: center; padding: 13px 0; height: 41px; border-bottom: 1px solid rgba(59,65,81,.3); }
.resp-code { width: 84px; font-size: 14px; font-weight: 700; }
.resp-desc { font-size: 12px; font-weight: 700; }

/* taskbar */
.taskbar { flex: 0 0 30px; display: flex; align-items: center; padding-left: 10px; background: linear-gradient(90deg, #3c202c 0%, #42222e 25%, #50343a 36%, #4f4438 50%, #4c4a3b 75%, #4b493a 92%, #5a4540 98%, #4a3c3a 100%); color: #fff; }
.win-logo { width: 16px; height: 16px; display: block; flex: none; }
.task-div { width: 3px; height: 14px; margin-left: 16px; border-left: 1px solid #5c4450; border-right: 1px solid #5c4450; flex: none; }
.task-div-2 { margin-left: 519.500px; margin-right: 14.500px; }
.ticon { flex: 0 0 37px; height: 30px; display: flex; align-items: center; justify-content: center; }
.ticon-run { background: linear-gradient(#b9b6ae, #b9b6ae) center bottom / 28px 2px no-repeat; }
.ticon-active { background-color: rgba(255,255,255,.05); }
.tsvg { width: 18px; height: 18px; display: block; }
.tray { margin-left: auto; display: flex; align-items: center; height: 30px; font-family: "Noto Sans", sans-serif; font-size: 11.500px; }
.tray-i { width: 24px; display: flex; justify-content: center; }
.tray-kb { width: 30px; }
.tray-ico { width: 16px; height: 16px; display: block; }
.kb-ico { width: 24px; height: 14px; display: block; }
.tray-lang { width: 38px; text-align: center; }
.tray-time { width: 60px; text-align: center; white-space: nowrap; }
.tray-note { width: 42px; display: flex; justify-content: center; }
.note-ico { width: 16px; height: 14px; display: block; }
.show-desk { width: 12px; }
```
